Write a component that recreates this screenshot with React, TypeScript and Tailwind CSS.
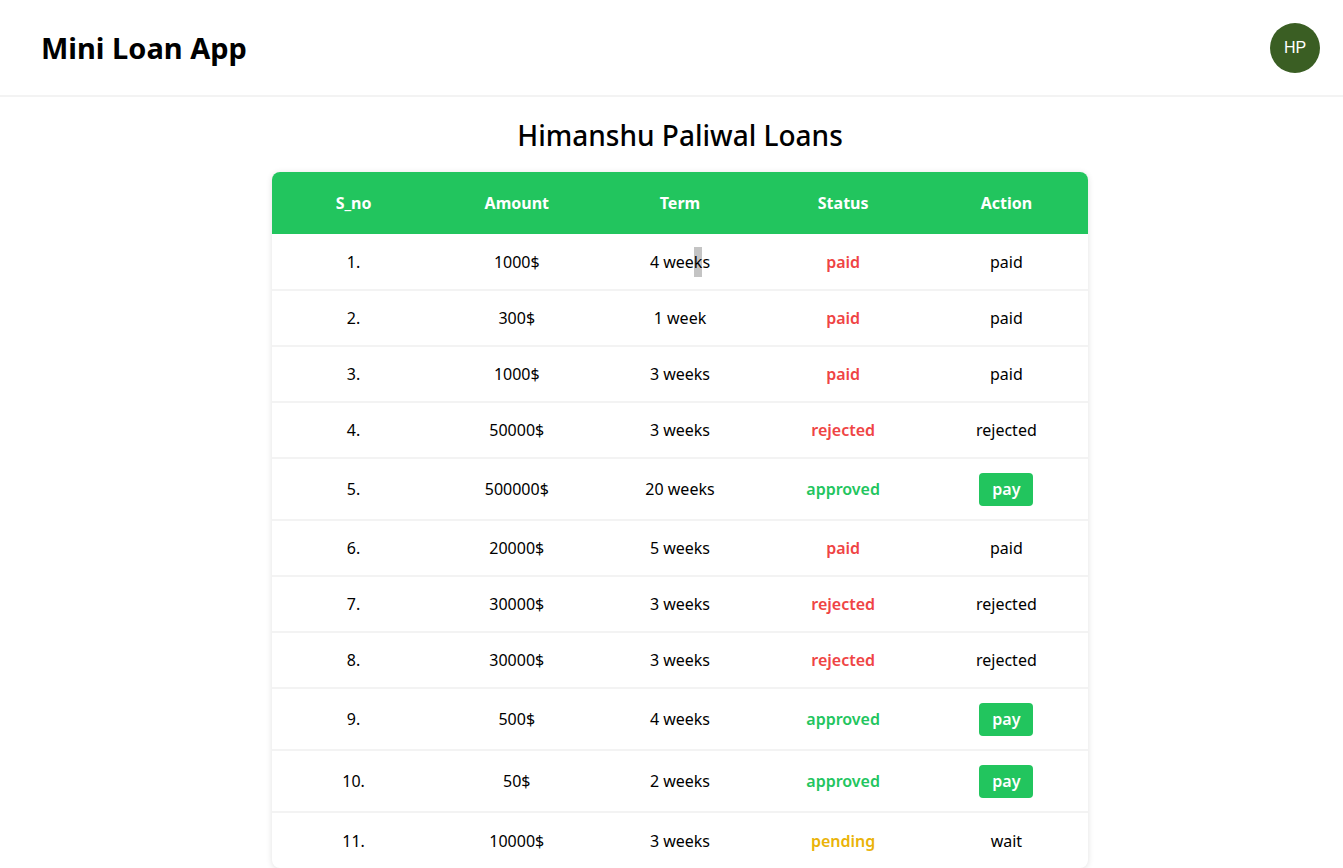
// Mini Loan App — loans table for one user
const loans = [
  { amount: "1000$", term: "4 weeks", status: "paid" },
  { amount: "300$", term: "1 week", status: "paid" },
  { amount: "1000$", term: "3 weeks", status: "paid" },
  { amount: "50000$", term: "3 weeks", status: "rejected" },
  { amount: "500000$", term: "20 weeks", status: "approved" },
  { amount: "20000$", term: "5 weeks", status: "paid" },
  { amount: "30000$", term: "3 weeks", status: "rejected" },
  { amount: "30000$", term: "3 weeks", status: "rejected" },
  { amount: "500$", term: "4 weeks", status: "approved" },
  { amount: "50$", term: "2 weeks", status: "approved" },
  { amount: "10000$", term: "3 weeks", status: "pending" },
];

const statusColor: Record<string, string> = {
  paid: "text-[#ef4444]",
  rejected: "text-[#ef4444]",
  approved: "text-[#22c55e]",
  pending: "text-[#eab308]",
};

function Action({ status }: { status: string }) {
  if (status === "approved") {
    return (
      <button className="rounded-[4px] bg-[#22c55e] px-[13px] py-[4px] text-[16px] font-semibold leading-[25px] text-white">
        pay
      </button>
    );
  }
  if (status === "pending") return <span>wait</span>;
  return <span>{status}</span>;
}

export default function App() {
  return (
    <div className="min-h-screen bg-white text-black" style={{ fontFamily: '"Noto Sans", "Open Sans", sans-serif' }}>
      <header className="flex h-[97px] items-center justify-between border-b-2 border-[#f3f3f3] pl-[41px] pr-[23px]">
        <h1 className="text-[29px] font-bold leading-none">Mini Loan App</h1>
        <div
          className="flex size-[50px] items-center justify-center rounded-full bg-[#3a5e23] text-[16px] text-white"
          style={{ fontFamily: '"Liberation Sans", Arial, sans-serif' }}
        >
          HP
        </div>
      </header>

      <main className="flex flex-col items-center pl-[17px]">
        <h2 className="mt-[18px] text-[28px] font-medium leading-[40px]">Himanshu Paliwal Loans</h2>
        <div className="mt-[17px] w-[816px] overflow-hidden rounded-[8px] bg-white shadow-[0_1px_6px_rgba(0,0,0,0.12)]">
          <table className="w-full table-fixed border-collapse text-center text-[16px]">
            <thead>
              <tr className="h-[62px] bg-[#22c55e] font-semibold text-white">
                <th>S_no</th>
                <th>Amount</th>
                <th>Term</th>
                <th>Status</th>
                <th>Action</th>
              </tr>
            </thead>
            <tbody>
              {loans.map((l, i) => (
                <tr
                  key={i}
                  className={`${l.status === "approved" ? "h-[62px]" : "h-[56px]"} ${i < loans.length - 1 ? "border-b-2 border-[#f3f3f3]" : ""}`}
                >
                  <td>{i + 1}.</td>
                  <td>{l.amount}</td>
                  <td>
                    {i === 0 ? (
                      <>
                        4 wee<span className="bg-[#c4c4c4] py-[4px]">k</span>s
                      </>
                    ) : (
                      l.term
                    )}
                  </td>
                  <td className={`font-semibold ${statusColor[l.status]}`}>{l.status}</td>
                  <td>
                    <Action status={l.status} />
                  </td>
                </tr>
              ))}
            </tbody>
          </table>
        </div>
      </main>
    </div>
  );
}
